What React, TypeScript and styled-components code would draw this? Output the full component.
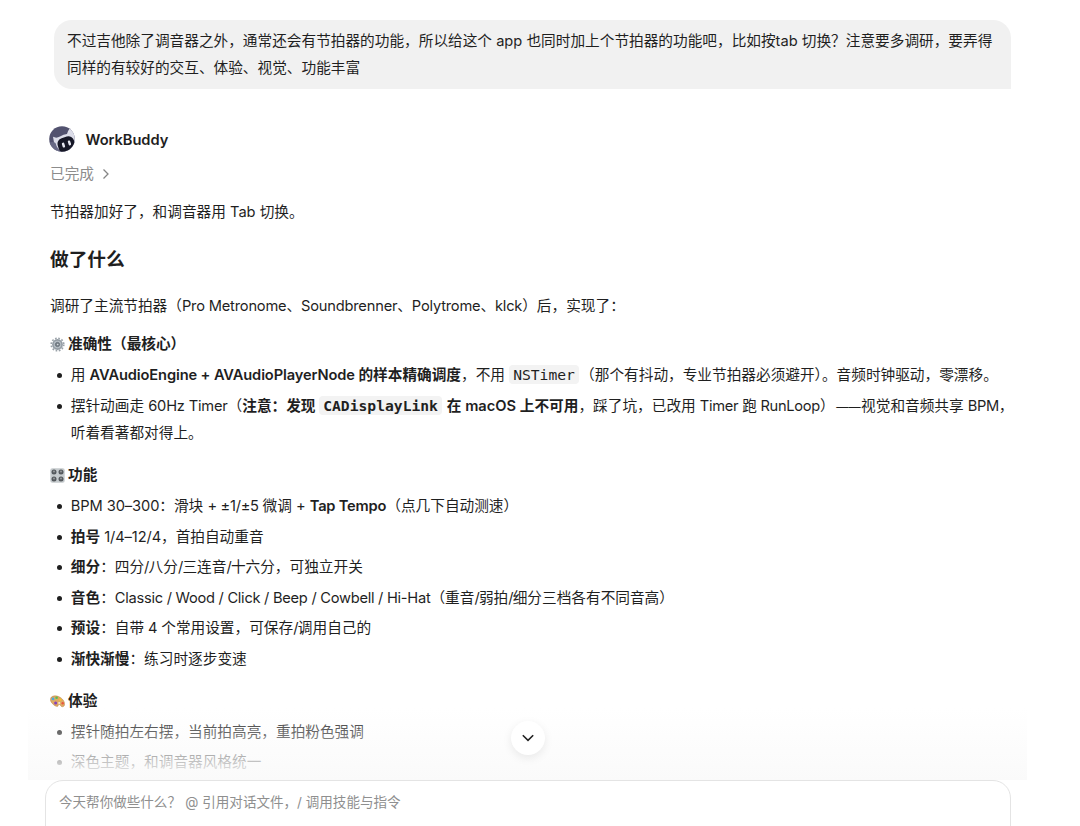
import React from 'react';
import styled, { createGlobalStyle } from 'styled-components';

const GlobalStyle = createGlobalStyle`
  * { box-sizing: border-box; }
  body {
    margin: 0;
    background: #fff;
    color: #1f1f1f;
    font-family: Inter, "Noto Sans CJK SC", sans-serif;
    font-size: 14.67px;
    line-height: 26.67px;
    overflow: hidden;
  }
`;

const Page = styled.main`
  position: relative;
  display: flex;
  flex-direction: column;
  width: 1080px;
  height: 826px;
  overflow: hidden;
`;

const Thread = styled.div`
  flex: none;
  height: 780px;
  padding: 20px 69px 0 50px;
  overflow: hidden;
  white-space: nowrap;
`;

const Bubble = styled.div`
  width: 957px;
  height: 69px;
  margin-left: 3.6px;
  padding: 8px 13.4px;
  border-radius: 18px 18px 0 18px;
  background: #f1f1f1;
`;

const Author = styled.div`
  display: flex;
  align-items: center;
  gap: 10.5px;
  height: 26px;
  margin: 37px 0 0 -1px;
  font-weight: 600;
`;

const Name = styled.span`
  padding-top: 2px;
  letter-spacing: -0.05px;
`;

const Status = styled.div`
  display: flex;
  align-items: center;
  gap: 8px;
  height: 26px;
  margin-top: 9px;
  color: #8c8c8c;
`;

const Paragraph = styled.p<{ $top: number }>`
  height: 26px;
  margin: ${p => p.$top}px 0 0;
`;

const Heading = styled.h2`
  height: 30px;
  margin: 20px 0 0;
  font-size: 18.7px;
  font-weight: 600;
  line-height: 30px;
`;

const Section = styled.h3<{ $top: number }>`
  display: flex;
  align-items: center;
  gap: 3px;
  height: 26px;
  margin: ${p => p.$top}px 0 0;
  font-size: inherit;
  font-weight: 600;
`;

const List = styled.ul`
  display: flex;
  flex-direction: column;
  gap: 3.8px;
  margin: 4.4px 0 0;
  padding: 0;
  list-style: none;
`;

const Item = styled.li`
  position: relative;
  padding-left: 20.8px;
  &::before {
    content: '';
    position: absolute;
    left: 7px;
    top: 11px;
    width: 5px;
    height: 5px;
    border-radius: 50%;
    background: currentColor;
  }
`;

const RoomyList = styled(List)`
  gap: 4.5px;
`;

const Strong = styled.strong`
  font-weight: 600;
`;

const Latin = styled.span<{ $track: number }>`
  letter-spacing: ${p => p.$track}px;
`;

const Dash = styled.span`
  padding: 0 0.5px 0 1.5px;
  font-size: 12.2px;
  line-height: 1;
`;

const Code = styled.code`
  margin-right: 1.2px;
  padding: 1px 4px;
  border-radius: 4px;
  background: #f3f3f3;
  font-family: "DejaVu Sans Mono", monospace;
  font-size: 14.67px;
  line-height: 16px;
`;

const Fade = styled.div`
  position: absolute;
  left: 28px;
  top: 708px;
  width: 999px;
  height: 72px;
  background: linear-gradient(rgba(250, 250, 250, 0), #fafafa);
`;

const ScrollButton = styled.button`
  position: absolute;
  left: 511px;
  top: 721px;
  display: grid;
  place-items: center;
  width: 34px;
  height: 34px;
  padding: 0;
  border: 0;
  border-radius: 50%;
  background: #fff;
  box-shadow: 0 3px 10px rgba(0, 0, 0, 0.08);
`;

const Composer = styled.div`
  flex: none;
  width: 966px;
  height: 80px;
  margin-left: 45px;
  padding: 7.5px 13px;
  border: 1px solid #e4e4e4;
  border-radius: 18px;
  background: #fff;
  color: #8f8f8f;
  font-size: 13.55px;
  white-space: pre;
`;

const Avatar = () => (
  <svg width="26" height="26" viewBox="0 0 26 26">
    <clipPath id="disc"><circle cx="13" cy="13" r="12.8" /></clipPath>
    <g clipPath="url(#disc)">
      <rect width="26" height="26" fill="#52526f" />
      <path d="M4 10.8 Q7.5 12.6 11 10.5 Q14.5 8 18 8 Q19 4.5 21 2 L27 6 V27 H9 Q4.5 19 4 10.8Z" fill="#dcdde9" />
      <path d="M0 17 Q4 15 6.5 17 Q8 23 13 26 H0Z" fill="#686985" />
      <rect x="9" y="11.2" width="17" height="15" rx="5.8" transform="rotate(-17 17 19)" fill="#171827" />
      <rect x="13.2" y="16.6" width="2.5" height="5" rx="1.2" transform="rotate(-17 14.5 19)" fill="#e7e8f2" />
      <rect x="19.2" y="14.5" width="2.5" height="5" rx="1.2" transform="rotate(-17 20.4 17)" fill="#e7e8f2" />
    </g>
  </svg>
);

const Gear = () => (
  <svg width="15" height="15" viewBox="0 0 15 15">
    <circle cx="7.5" cy="7.5" r="6.3" fill="none" stroke="#9aa2a9" strokeWidth="1.6" strokeDasharray="1.7 1.6" />
    <circle cx="7.5" cy="7.5" r="4.6" fill="#b5bdc4" stroke="#929ba3" strokeWidth="1.6" />
    <circle cx="7.5" cy="7.5" r="2.1" fill="#7a838b" stroke="#616a72" strokeWidth=".8" />
    <circle cx="7.7" cy="7.5" r=".8" fill="#d5dade" />
  </svg>
);

const Knobs = () => (
  <svg width="15" height="15" viewBox="0 0 15 15">
    <rect x=".3" y=".3" width="14.4" height="14.4" rx="2" fill="#c5cacd" />
    {[4, 11].map(x => [4, 11].map(y => (
      <g key={`${x}-${y}`}>
        <circle cx={x} cy={y} r="2.5" fill="#55595d" />
        <circle cx={x} cy={y - 0.6} r="1" fill="#96999c" />
      </g>
    )))}
  </svg>
);

const Palette = () => (
  <svg width="15" height="15" viewBox="0 0 15 15">
    <path d="M.5 5.2 C.8 1.5 6 .9 10 3.3 C13.5 5.3 15.6 9.4 14.2 11.7 C13 13.6 11 12.6 10.3 11.2 C9.4 9.7 8 10 8.2 11.4 C8.3 13 5.6 12.6 3.6 10.7 C1.6 9 .2 7.3 .5 5.2Z" fill="#dfa963" stroke="#b98045" strokeWidth=".5" />
    <circle cx="3" cy="4.9" r="1.4" fill="#48a9de" />
    <circle cx="6.6" cy="3.7" r="1.3" fill="#5bbd4b" />
    <circle cx="10.2" cy="5.7" r="1.2" fill="#f3c52f" />
    <circle cx="12.7" cy="9.2" r="1.2" fill="#e9553e" />
    <circle cx="5.6" cy="9" r="1.5" fill="#8441bd" />
    <ellipse cx="9.2" cy="9" rx="1.1" ry=".8" fill="#fff" />
  </svg>
);

export default function App() {
  return (
    <Page>
      <GlobalStyle />
      <Thread>
        <Bubble>
          不过吉他除了调音器之外，通常还会有节拍器的功能，所以给这个 app 也同时加上个节拍器的功能吧，比如按tab 切换？注意要多调研，要弄得
          <br />
          同样的有较好的交互、体验、视觉、功能丰富
        </Bubble>
        <Author><Avatar /><Name>WorkBuddy</Name></Author>
        <Status>
          已完成
          <svg width="8" height="12" viewBox="0 0 8 12" fill="none" stroke="#858585" strokeWidth="1.3"><path d="M1.5 1.5 6 6 1.5 10.5" /></svg>
        </Status>
        <Paragraph $top={12}>节拍器加好了，和调音器用 Tab 切换。</Paragraph>
        <Heading>做了什么</Heading>
        <Paragraph $top={18}>调研了主流节拍器（<Latin $track={-0.19}>Pro Metronome、Soundbrenner、Polytrome、klck</Latin>）后，实现了：</Paragraph>
        <Section $top={12.5}><Gear />准确性（最核心）</Section>
        <RoomyList>
          <Item>
            用 <Strong><Latin $track={-0.13}>AVAudioEngine + AVAudioPlayerNode</Latin> 的样本精确调度</Strong>，不用 <Code>NSTimer</Code>（那个有抖动，专业节拍器必须避开）。音频时钟驱动，零漂移。
          </Item>
          <Item>
            摆针动画走 <Latin $track={-0.2}>60Hz Timer</Latin>（<Strong>注意：发现 <Code>CADisplayLink</Code> 在 macOS 上不可用</Strong>，踩了坑，已改用 <Latin $track={-0.28}>Timer 跑 RunLoop</Latin>）<Dash>——</Dash>视觉和音频共享 <Latin $track={-0.4}>BPM</Latin>，
            <br />
            听着看著都对得上。
          </Item>
        </RoomyList>
        <Section $top={16.4}><Knobs />功能</Section>
        <List>
          <Item><Latin $track={-0.1}>BPM 30–300</Latin>：滑块 <Latin $track={-0.3}>+ ±1/±5 </Latin>微调 + <Strong><Latin $track={-0.2}>Tap Tempo</Latin></Strong>（点几下自动测速）</Item>
          <Item><Strong>拍号</Strong> <Latin $track={-0.12}>1/4–12/4</Latin>，首拍自动重音</Item>
          <Item><Strong>细分</Strong>：四分<Latin $track={-0.8}>/</Latin>八分<Latin $track={-0.8}>/</Latin>三连音<Latin $track={-0.8}>/</Latin>十六分，可独立开关</Item>
          <Item><Strong>音色</Strong>：<Latin $track={-0.27}>Classic / Wood / Click / Beep / Cowbell / Hi-Hat</Latin>（重音<Latin $track={-0.8}>/</Latin>弱拍<Latin $track={-0.8}>/</Latin>细分三档各有不同音高）</Item>
          <Item><Strong>预设</Strong>：自带<Latin $track={-0.2}> 4 </Latin>个常用设置，可保存<Latin $track={-0.6}>/</Latin>调用自己的</Item>
          <Item><Strong>渐快渐慢</Strong>：练习时逐步变速</Item>
        </List>
        <Section $top={16.2}><Palette />体验</Section>
        <List>
          <Item>摆针随拍左右摆，当前拍高亮，重拍粉色强调</Item>
          <Item>深色主题，和调音器风格统一</Item>
        </List>
      </Thread>
      <Fade />
      <Composer>今天帮你做些什么？<Latin $track={-1.6}>  </Latin>@ 引用对话文件，/ 调用技能与指令</Composer>
      <ScrollButton aria-label="滚动到底部">
        <svg width="14" height="10" viewBox="0 0 14 10" fill="none" stroke="#222" strokeWidth="1.6"><path d="M1.8 2.2 7 7.4 12.2 2.2" /></svg>
      </ScrollButton>
    </Page>
  );
}
